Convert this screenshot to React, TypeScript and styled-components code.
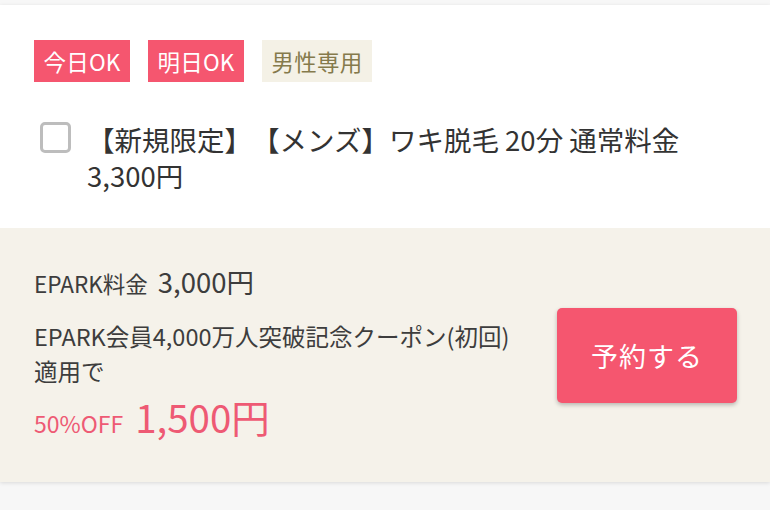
import React from "react";
import styled, { createGlobalStyle } from "styled-components";

const Global = createGlobalStyle`
  html, body {
    margin: 0;
    padding: 0;
    background: #f7f7f7;
    font-family: "Noto Sans CJK JP", "Noto Sans", sans-serif;
    color: #333;
    text-spacing-trim: space-all;
  }
`;

const Page = styled.div`
  width: 770px;
  height: 510px;
  overflow: hidden;
  background: #f7f7f7;
  padding-top: 5px;
  box-sizing: border-box;
`;

const Card = styled.div`
  background: #fff;
  box-shadow: 0 1px 4px rgba(0, 0, 0, 0.12);
`;

const Head = styled.div`
  padding: 35px 34px 35px;
`;

const Tags = styled.div`
  display: flex;
  gap: 18px;
`;

const Tag = styled.span<{ $variant: "pink" | "beige" }>`
  display: inline-flex;
  align-items: center;
  height: 42px;
  padding: 0 9.5px;
  font-size: 22.5px;
  letter-spacing: 0.2px;
  background: ${(p) => (p.$variant === "pink" ? "#f5566f" : "#f4f1e6")};
  color: ${(p) => (p.$variant === "pink" ? "#fff" : "#857a4c")};
`;

const Item = styled.label`
  display: flex;
  align-items: flex-start;
  margin-top: 39px;
`;

const Check = styled.span`
  flex: none;
  width: 31px;
  height: 31px;
  box-sizing: border-box;
  border: 3px solid #bdbdbd;
  border-radius: 5px;
  margin: 1px 16px 0 6px;
`;

const Title = styled.div`
  font-size: 27.5px;
  line-height: 36px;
  color: #333;
`;

const Price = styled.div`
  background: #f5f2ea;
  display: flex;
  align-items: center;
  justify-content: space-between;
  padding: 35px 34px 42px 34px;
`;

const Info = styled.div`
  display: flex;
  flex-direction: column;
`;

const Row = styled.div<{ $gap: number }>`
  display: flex;
  align-items: baseline;
  gap: ${(p) => p.$gap}px;
`;

const Label = styled.span`
  font-size: 22.5px;
  line-height: 36px;
  color: #3d3d3d;
`;

const Amount = styled.span`
  font-size: 27.5px;
  line-height: 36px;
  color: #3d3d3d;
`;

const Note = styled.div`
  margin: 18px 0 5px;
  font-size: 23.5px;
  line-height: 35px;
  color: #3d3d3d;
`;

const Off = styled.span`
  font-size: 23px;
  color: #ee5a74;
`;

const Discount = styled.span`
  font-size: 38.5px;
  line-height: 44px;
  color: #ee5a74;
`;

const Button = styled.button`
  width: 180px;
  height: 95px;
  margin: 7px -1px 0 0;
  border: none;
  border-radius: 5px;
  background: #f5566f;
  color: #fff;
  font-family: inherit;
  font-size: 27px;
  letter-spacing: 1px;
  box-shadow: 0 2px 4px rgba(0, 0, 0, 0.25);
`;

export default function App() {
  return (
    <Page>
      <Global />
      <Card>
        <Head>
          <Tags>
            <Tag $variant="pink">今日OK</Tag>
            <Tag $variant="pink">明日OK</Tag>
            <Tag $variant="beige">男性専用</Tag>
          </Tags>
          <Item>
            <Check />
            <Title>
              【新規限定】【メンズ】ワキ脱毛 20分 通常料金
              <br />
              3,300円
            </Title>
          </Item>
        </Head>
        <Price>
          <Info>
            <Row $gap={10}>
              <Label>EPARK料金</Label>
              <Amount>3,000円</Amount>
            </Row>
            <Note>
              EPARK会員4,000万人突破記念クーポン(初回)
              <br />
              適用で
            </Note>
            <Row $gap={12}>
              <Off>50%OFF</Off>
              <Discount>1,500円</Discount>
            </Row>
          </Info>
          <Button>予約する</Button>
        </Price>
      </Card>
    </Page>
  );
}
